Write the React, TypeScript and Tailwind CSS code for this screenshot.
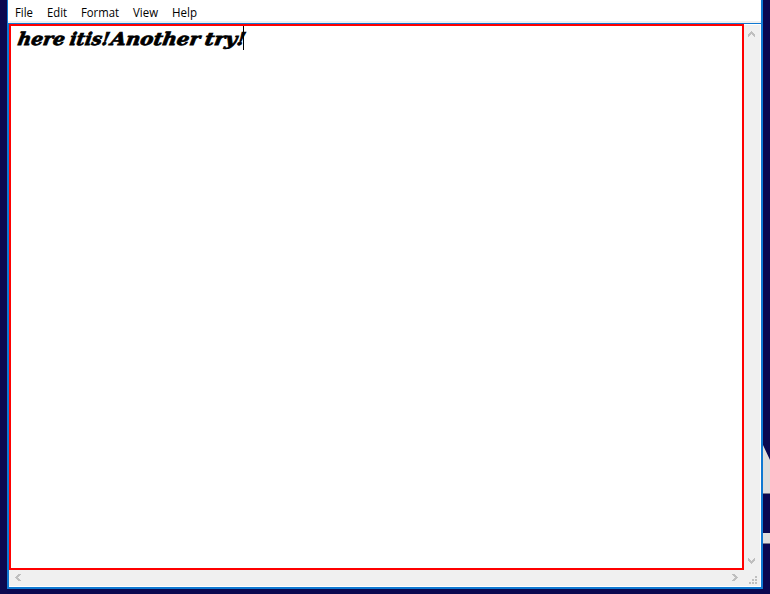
const menus = [
  { label: 'File', width: 'w-[32px]', text: 18 },
  { label: 'Edit', width: 'w-[34px]', text: 20 },
  { label: 'Format', width: 'w-[52px]', text: 38 },
  { label: 'View', width: 'w-[39px]', text: 25 },
  { label: 'Help', width: 'w-[40px]', text: 25 },
];

const words = [
  { text: 'here', x: 6, width: 47 },
  { text: 'itis!', x: 58, width: 40 },
  { text: 'Another', x: 99, width: 89 },
  { text: 'try!', x: 193, width: 41 },
];

function MenuBar() {
  return (
    <div className="flex h-[21px] bg-white">
      {menus.map((m) => (
        <div key={m.label} className={`${m.width} h-[21px] shrink-0`}>
          <svg width={m.text + 2} height="21" className="ml-[7px] block overflow-visible">
            <text x="0" y="17" fontSize="12" fill="#000" textLength={m.text} lengthAdjust="spacingAndGlyphs" fontFamily="'Open Sans', 'Noto Sans', sans-serif">
              {m.label}
            </text>
          </svg>
        </div>
      ))}
    </div>
  );
}

const chevrons = {
  up: 'M3 0h1v1h1v1h1v1h1v3h-1v-1h-1v-1h-1v-1h-1v1h-1v1h-1v1h-1v-3h1v-1h1v-1h1z',
  down: 'M3 6h1v-1h1v-1h1v-1h1v-3h-1v1h-1v1h-1v1h-1v-1h-1v-1h-1v-1h-1v3h1v1h1v1h1z',
  left: 'M0 3v1h1v1h1v1h1v1h3v-1h-1v-1h-1v-1h-1v-1h1v-1h1v-1h1v-1h-3v1h-1v1h-1v1z',
  right: 'M6 3v1h-1v1h-1v1h-1v1h-3v-1h1v-1h1v-1h1v-1h-1v-1h-1v-1h-1v-1h3v1h1v1h1v1z',
};

function Arrow({ direction }: { direction: keyof typeof chevrons }) {
  const upright = direction === 'up' || direction === 'down';
  return (
    <svg width={upright ? 7 : 6} height={upright ? 6 : 7} className="block shrink-0">
      <path d={chevrons[direction]} fill="#bfbfbf" />
    </svg>
  );
}

export default function App() {
  return (
    <div className="flex h-[594px] w-[770px] overflow-hidden bg-[#0a0850]">
      <div className="h-full w-[7px] shrink-0 bg-[#0c0950]" />
      <div className="flex h-[589px] w-[756px] shrink-0 flex-col border-r-2 border-b-2 border-l border-[#1079d2] bg-[#f0f0f0]">
        <MenuBar />
        <div className="h-[2px] bg-[#f0f0f0]" />
        <div className="flex h-[564px] flex-col border-t border-l border-[#1079d2]">
          <div className="flex h-[546px]">
            <div className="h-[546px] w-[735px] shrink-0 border-2 border-[#ff0000] bg-white">
              <svg width="240" height="28" className="block overflow-visible">
                {words.map((w) => (
                  <text
                    key={w.text}
                    x="0"
                    y="0"
                    transform={`translate(${w.x} 19) skewX(-9)`}
                    fontSize="17.5"
                    fontWeight="bold"
                    fontStyle="italic"
                    fontFamily="'DejaVu Serif', serif"
                    stroke="#000"
                    strokeWidth="0.8"
                    textLength={w.width}
                    lengthAdjust="spacingAndGlyphs"
                  >
                    {w.text}
                  </text>
                ))}
                <rect x="232" y="0" width="1" height="24" fill="#000" />
              </svg>
            </div>
            <div className="flex w-[17px] flex-col items-start justify-between border-t border-r border-white pt-[6px] pb-[6px] pl-1">
              <Arrow direction="up" />
              <Arrow direction="down" />
            </div>
          </div>
          <div className="flex h-[17px] border-r border-b border-white">
            <div className="flex w-[735px] items-start justify-between pt-1 pr-[6px] pl-[6px]">
              <Arrow direction="left" />
              <Arrow direction="right" />
            </div>
            <svg width="16" height="16" fill="#bfbfbf">
              <path d="M11 6h2v2h-2zM8 9h2v2h-2zM11 9h2v2h-2zM5 12h2v2h-2zM8 12h2v2h-2zM11 12h2v2h-2z" />
            </svg>
          </div>
        </div>
      </div>
      <svg width="7" height="594" className="shrink-0">
        <path d="M0 445 L7 460 V493 H0Z" fill="#dededc" />
        <path d="M0 493.500H7M0 543.500H7" stroke="#77778a" />
        <rect y="533" width="7" height="10" fill="#dededc" />
      </svg>
    </div>
  );
}
